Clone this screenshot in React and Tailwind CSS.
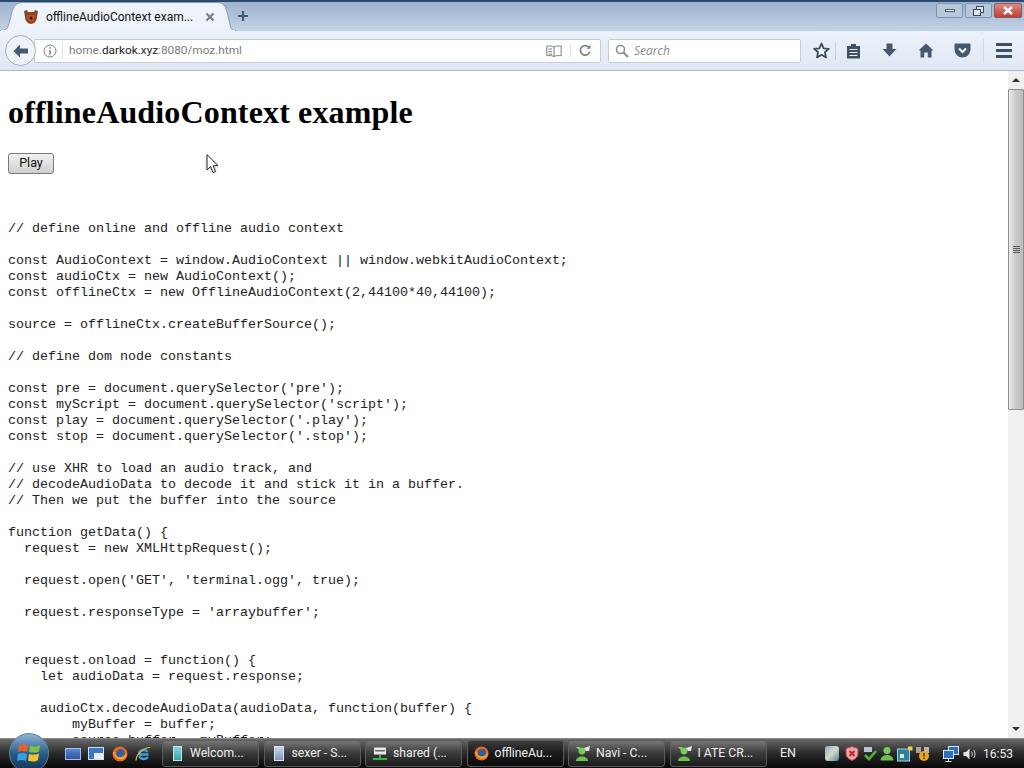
import React from 'react';

const codeLines = [
  "// define online and offline audio context",
  "",
  "const AudioContext = window.AudioContext || window.webkitAudioContext;",
  "const audioCtx = new AudioContext();",
  "const offlineCtx = new OfflineAudioContext(2,44100*40,44100);",
  "",
  "source = offlineCtx.createBufferSource();",
  "",
  "// define dom node constants",
  "",
  "const pre = document.querySelector('pre');",
  "const myScript = document.querySelector('script');",
  "const play = document.querySelector('.play');",
  "const stop = document.querySelector('.stop');",
  "",
  "// use XHR to load an audio track, and",
  "// decodeAudioData to decode it and stick it in a buffer.",
  "// Then we put the buffer into the source",
  "",
  "function getData() {",
  "  request = new XMLHttpRequest();",
  "",
  "  request.open('GET', 'terminal.ogg', true);",
  "",
  "  request.responseType = 'arraybuffer';",
  "",
  "",
  "  request.onload = function() {",
  "    let audioData = request.response;",
  "",
  "    audioCtx.decodeAudioData(audioData, function(buffer) {",
  "        myBuffer = buffer;",
  "        source.buffer = myBuffer;",
];

const FirefoxIcon = ({ size = 15 }) => (
  <svg width={size} height={size} viewBox="0 0 16 16">
    <circle cx="8" cy="8" r="7.5" fill="#e8641f" />
    <circle cx="8.5" cy="7.5" r="4.4" fill="#2f5f9e" />
    <path d="M1 6 C2 12 8 15 12 13 C15 11 15 8 14 5 C14 9 11 11 8 11 C5 11 3 9 3.5 6 Z" fill="#f3a02c" />
  </svg>
);

const BuddyIcon = () => (
  <svg width="16" height="17" viewBox="0 0 16 17">
    <circle cx="7" cy="6" r="3.4" fill="#7ccb5f" />
    <path d="M1 16 C1 10 13 10 13 16 Z" fill="#6cbf50" />
    <path d="M9 3 L15 1 L14 6 L11 6 Z" fill="#dfe9e4" />
    <path d="M1 2 L5 2 L4 5 Z" fill="#8fd66f" />
  </svg>
);

const TaskButton = ({ icon, label, active }) => (
  <div className={`w-[97px] h-[27px] mr-[4.5px] shrink-0 flex items-center pl-[6px] gap-[5px] rounded-[3px] border border-[#5c5c5c] ${active ? 'bg-gradient-to-b from-[#3c3c3c] via-[#1a1a1a] to-[#0c0c0c]' : 'bg-gradient-to-b from-[#777777] via-[#3a3a3a] to-[#1c1c1c]'}`}>
    <span className="w-[16px] flex justify-center shrink-0">{icon}</span>
    <span className="text-[12.2px] text-[#f0f0f0] whitespace-nowrap font-['Roboto',sans-serif]">{label}</span>
  </div>
);

export default function App() {
  return (
    <div className="relative w-[1024px] h-[768px] overflow-hidden flex flex-col bg-white font-['Liberation_Sans',sans-serif]">
      {/* Title bar and tab */}
      <div className="h-[31px] shrink-0 flex items-start border-t-2 border-[#2a4a70] bg-gradient-to-b from-[#9db2cc] to-[#c3d3e8]">
        <div className="relative w-[236px] h-[29px] flex items-center pl-[23px] shrink-0">
          <svg className="absolute inset-0" width="236" height="29" viewBox="0 0 236 29">
            <path d="M0 28.5 C8 28.5 8 26 11 14 C13 5 15 0.5 23 0.5 L218 0.5 C224 0.5 226 5 228 14 C231 26 230 28.5 236 28.5 Z" fill="#eef3f9" stroke="#8b9db3" />
            <path d="M1 29 L235 29" stroke="#eaf0f8" strokeWidth="2" />
          </svg>
          <svg className="relative mr-[7px]" width="16" height="16" viewBox="0 0 16 16">
            <path d="M1 2 L4 1 L5 3 L11 3 L12 1 L15 2 L14 8 C14 12 11 15 8 15 C5 15 2 12 2 8 Z" fill="#8a4a20" />
            <path d="M4 6 L12 6 L11 11 L8 13 L5 11 Z" fill="#c4502a" />
            <circle cx="8" cy="9" r="1.5" fill="#2c1a10" />
          </svg>
          <span className="relative text-[12px] text-[#111111] whitespace-nowrap w-[152px] font-['Roboto',sans-serif]">offlineAudioContext exam...</span>
          <svg className="relative ml-[7px]" width="10" height="10" viewBox="0 0 10 10">
            <path d="M1.5 1.5 L8.5 8.5 M8.5 1.5 L1.5 8.5" stroke="#7a8088" strokeWidth="2.2" />
          </svg>
        </div>
        <svg className="ml-[1px] mt-[8px]" width="12" height="12" viewBox="0 0 12 12">
          <path d="M6 1 V11 M1 6 H11" stroke="#44586f" strokeWidth="2.2" />
        </svg>
        <div className="ml-auto mt-[1px] mr-[2px] flex gap-[2px]">
          <div className="w-[27px] h-[15px] rounded-[2px] border border-[#7f92ab] bg-[#b7c8dd] flex items-center justify-center">
            <div className="w-[10px] h-[3px] bg-[#f2f5f9] border border-[#4c5b6c]" />
          </div>
          <div className="w-[27px] h-[15px] rounded-[2px] border border-[#7f92ab] bg-[#b7c8dd] flex items-center justify-center">
            <svg width="11" height="10" viewBox="0 0 11 10" fill="#dbe5ef" stroke="#3c4a5a">
              <rect x="3.5" y="0.5" width="7" height="6" />
              <rect x="0.5" y="3.5" width="7" height="6" />
            </svg>
          </div>
          <div className="w-[28px] h-[15px] rounded-[2px] border border-[#8a5a5a] bg-gradient-to-b from-[#dc8a80] to-[#c23c30] flex items-center justify-center">
            <svg width="10" height="9" viewBox="0 0 10 9">
              <path d="M1 1 L9 8 M9 1 L1 8" stroke="#ffffff" strokeWidth="2.4" />
            </svg>
          </div>
        </div>
      </div>

      {/* Navigation bar */}
      <div className="h-[40px] shrink-0 flex items-center pl-[5px] border-b border-[#b4bcc6] bg-gradient-to-b from-[#ecf2fa] to-[#e0e8f4]">
        <div className="relative z-10 w-[31px] h-[31px] shrink-0 rounded-full border border-[#a3afbd] bg-[#eef3f9] flex items-center justify-center">
          <svg width="16" height="14" viewBox="0 0 16 14">
            <path d="M7 0.5 L0.5 7 L7 13.5 L7 9.5 L15 9.5 L15 4.5 L7 4.5 Z" fill="#47596e" />
          </svg>
        </div>
        <div className="-ml-[2px] w-[567px] h-[24px] shrink-0 flex items-center bg-white border border-[#c3ccd8] rounded-r-[2px]">
          <svg className="ml-[8px]" width="14" height="14" viewBox="0 0 14 14" fill="none">
            <circle cx="7" cy="7" r="6" stroke="#7b7f85" />
            <path d="M7 6 V10.5 M7 3.2 V4.8" stroke="#7b7f85" strokeWidth="1.5" />
          </svg>
          <div className="w-px h-[18px] bg-[#dfe3e8] ml-[5px] mr-[6px]" />
          <span className="text-[11.8px] text-[#7d7d7d] font-['Roboto',sans-serif]">home.<span className="text-[#222222]">darkok.xyz</span>:8080/moz.html</span>
          <svg className="ml-auto" width="16" height="12" viewBox="0 0 16 12" fill="none" stroke="#777c82">
            <path d="M8 2 C6 0.8 3 0.8 0.8 1.2 V10.8 C3 10.4 6 10.4 8 11.5 C10 10.4 13 10.4 15.2 10.8 V1.2 C13 0.8 10 0.8 8 2 Z M8 2 V11.5" />
            <path d="M2.5 4 H6 M2.5 6.5 H6 M2.5 9 H6" />
          </svg>
          <div className="w-px h-[14px] bg-[#dfe3e8] ml-[8px] mr-[8px]" />
          <svg className="mr-[8px]" width="13" height="13" viewBox="0 0 13 13" fill="none">
            <path d="M10.8 7.6 A4.8 4.8 0 1 1 9.6 3" stroke="#7d8185" strokeWidth="1.7" />
            <path d="M11.5 0.8 V4.8 H7.5 Z" fill="#7d8185" />
          </svg>
        </div>
        <div className="ml-[7px] w-[193px] h-[24px] shrink-0 flex items-center bg-white border border-[#c3ccd8] rounded-[2px] pl-[6px]">
          <svg width="14" height="14" viewBox="0 0 14 14" fill="none">
            <circle cx="5.5" cy="5.5" r="4" stroke="#8a8f95" strokeWidth="1.6" />
            <path d="M8.5 8.5 L13 13" stroke="#8a8f95" strokeWidth="2.2" />
          </svg>
          <span className="ml-[5px] text-[12px] italic text-[#8b8b8b] font-['Open_Sans',sans-serif]">Search</span>
        </div>
        <svg className="ml-[12px]" width="17" height="17" viewBox="0 0 17 17">
          <path d="M8.5 1.5 L10.6 6.3 L15.8 6.8 L11.9 10.2 L13 15.4 L8.5 12.7 L4 15.4 L5.1 10.2 L1.2 6.8 L6.4 6.3 Z" fill="#f4f7fb" stroke="#3a4c60" strokeWidth="1.8" strokeLinejoin="round" />
        </svg>
        <div className="w-px h-[18px] bg-[#c7d0dc] ml-[5px] mr-[10px]" />
        <svg width="15" height="16" viewBox="0 0 15 16">
          <path d="M1 3 H5 V1 H10 V3 H14 V15.5 H1 Z" fill="#3f5064" />
          <path d="M3.5 6.5 H11.5 M3.5 9.5 H11.5 M3.5 12.5 H11.5" stroke="#e8eef6" strokeWidth="1.2" />
        </svg>
        <svg className="ml-[21px]" width="15" height="15" viewBox="0 0 15 15">
          <path d="M4.5 0.5 H10.5 V6 H14.5 L7.5 13.5 L0.5 6 H4.5 Z" fill="#46586c" />
        </svg>
        <svg className="ml-[21px]" width="16" height="15" viewBox="0 0 16 15">
          <path d="M8 0.5 L15.5 7.5 L13.5 7.5 V14.5 H9.8 V9.5 H6.2 V14.5 H2.5 V7.5 H0.5 Z" fill="#46586c" />
        </svg>
        <svg className="ml-[20px]" width="17" height="15" viewBox="0 0 17 15">
          <path d="M1.5 0.5 H15.5 A1 1 0 0 1 16.5 1.5 V6 C16.5 11 12.5 14.5 8.5 14.5 C4.5 14.5 0.5 11 0.5 6 V1.5 A1 1 0 0 1 1.5 0.5 Z" fill="#46586c" />
          <path d="M5 5.5 L8.5 9 L12 5.5" fill="none" stroke="#eef3f9" strokeWidth="2.2" />
        </svg>
        <div className="w-px h-[24px] bg-[#d0d8e3] ml-[12px] mr-[12px]" />
        <div className="flex flex-col gap-[3px]">
          <div className="w-[16px] h-[3px] bg-[#3f5064]" />
          <div className="w-[16px] h-[3px] bg-[#3f5064]" />
          <div className="w-[16px] h-[3px] bg-[#3f5064]" />
        </div>
      </div>

      {/* Page content and scrollbar */}
      <div className="flex-1 min-h-0 flex">
        <div className="flex-1 min-w-0 overflow-hidden pl-[8px]">
          <h1 className="mt-[23px] text-[32px] leading-[37px] tracking-[0.15px] font-bold text-black font-['Liberation_Serif',serif]">offlineAudioContext example</h1>
          <button className="block mt-[22px] w-[46px] h-[21px] rounded-[3px] border border-[#7a7a7a] bg-gradient-to-b from-[#f2f2f2] to-[#cfcfcf] text-[12.5px] text-[#111111] font-['Roboto',sans-serif]">Play</button>
          <pre className="mt-[47px] text-[13.33px] leading-[16px] text-[#222222] font-['Liberation_Mono',monospace]">{codeLines.join("\n")}</pre>
        </div>
        <div className="w-[16px] shrink-0 flex flex-col bg-[#f0f0f0]">
          <div className="h-[18px] flex items-center justify-center">
            <div className="w-0 h-0 border-x-[4px] border-x-transparent border-b-[4px] border-b-[#333333]" />
          </div>
          <div className="h-[321px] border border-[#8e8e8e] rounded-[1px] bg-gradient-to-r from-[#ececec] via-[#c9c9c9] to-[#bcbcbc] flex flex-col items-center justify-center gap-[1px]">
            <div className="w-[7px] h-px bg-[#555555]" />
            <div className="w-[7px] h-px bg-[#555555]" />
            <div className="w-[7px] h-px bg-[#555555]" />
            <div className="w-[7px] h-px bg-[#555555]" />
          </div>
          <div className="mt-auto h-[18px] flex items-center justify-center">
            <div className="w-0 h-0 border-x-[4px] border-x-transparent border-t-[4px] border-t-[#333333]" />
          </div>
        </div>
      </div>

      {/* Taskbar */}
      <div className="h-[30px] shrink-0 flex items-center border-t border-[#8a8a8a] bg-gradient-to-b from-[#6a6a6a] via-[#2a2a2a] to-[#080808]">
        <div className="w-[65px] shrink-0" />
        <div className="w-[97px] shrink-0 flex items-center">
          <div className="w-[16px] h-[12px] bg-gradient-to-b from-[#5a86d0] to-[#2f55a0] border border-[#a9bfe3]" />
          <div className="ml-[7px] w-[16px] h-[13px] bg-[#3a78c4] border border-[#cfe0f4] flex items-end justify-end">
            <div className="w-[9px] h-[6px] bg-[#e8eef6]" />
          </div>
          <span className="ml-[8px]"><FirefoxIcon size={16} /></span>
          <svg className="ml-[7px]" width="16" height="16" viewBox="0 0 16 16" fill="none">
            <path d="M13.5 8.5 H4 M4 8.5 C4 4 10 2.5 12.5 6 M4.5 10 C5.5 13.5 10.5 14 13 11" stroke="#3fa0e0" strokeWidth="2.4" />
            <path d="M1 14.5 C1 9 8 1.5 15 1.5" stroke="#e8b93a" strokeWidth="1.2" />
          </svg>
        </div>
        <TaskButton
          label="Welcom..."
          icon={<div className="w-[9px] h-[15px] bg-gradient-to-b from-[#7fd8d8] to-[#2ea6b0] border border-[#bfe9e9]" />}
        />
        <TaskButton
          label="sexer - S..."
          icon={<div className="w-[10px] h-[15px] bg-gradient-to-b from-[#c9d6ea] to-[#7d95c0] border border-[#d9e2f0]" />}
        />
        <TaskButton
          label="shared (..."
          icon={
            <svg width="16" height="14" viewBox="0 0 16 14">
              <rect x="2" y="0.5" width="12" height="7" fill="#e8e8e8" />
              <rect x="3" y="3" width="10" height="1.5" fill="#666666" />
              <path d="M8 8 V11 M1 12 H15" stroke="#35b54a" strokeWidth="2" />
            </svg>
          }
        />
        <TaskButton label="offlineAu..." icon={<FirefoxIcon />} active />
        <TaskButton label="Navi - C..." icon={<BuddyIcon />} />
        <TaskButton label="I ATE CR..." icon={<BuddyIcon />} />
        <span className="ml-[9px] w-[17px] text-[12.5px] text-[#eeeeee] font-['Roboto',sans-serif]">EN</span>

        {/* Tray */}
        <div className="ml-[28px] flex items-center">
          <div className="w-[14px] h-[15px] rounded-[3px] bg-gradient-to-br from-[#7fb0d8] via-[#d8d8c0] to-[#4f7fb0]" />
          <svg className="ml-[6px]" width="14" height="15" viewBox="0 0 14 15">
            <path d="M7 0.5 L13 2.5 V8 C13 11 10 13.5 7 14.5 C4 13.5 1 11 1 8 V2.5 Z" fill="#e8a8ac" stroke="#b8434a" />
            <path d="M4.5 5 L9.5 10 M9.5 5 L4.5 10" stroke="#c8242c" strokeWidth="2" />
          </svg>
          <svg className="ml-[4px]" width="14" height="15" viewBox="0 0 14 15">
            <rect x="1" y="1" width="8" height="5" fill="#b8c4d4" />
            <path d="M2 9 L6 13 L13 5" fill="none" stroke="#4fae3a" strokeWidth="2.6" />
          </svg>
          <svg className="ml-[3px]" width="14" height="15" viewBox="0 0 14 15">
            <circle cx="7" cy="4.5" r="3.5" fill="#7ccb5f" />
            <path d="M0.5 14.5 C0.5 7 13.5 7 13.5 14.5 Z" fill="#6cbf50" />
          </svg>
          <svg className="ml-[3px]" width="16" height="16" viewBox="0 0 16 16">
            <rect x="0.5" y="3" width="12" height="12" fill="#2f7f98" stroke="#9fd0dc" />
            <rect x="3" y="8" width="4" height="4" fill="#d8e8ec" />
            <rect x="11" y="0.5" width="4.5" height="4" fill="#e8d04a" />
          </svg>
          <svg className="ml-[2px]" width="16" height="16" viewBox="0 0 16 16">
            <rect x="1" y="1" width="5" height="6" fill="#a8a49a" />
            <rect x="9" y="1" width="5" height="6" fill="#b8b4a8" />
            <circle cx="9" cy="10" r="5" fill="#e8a81e" />
            <path d="M9 7 V10.5 M9 11.5 V13" stroke="#3a2a08" strokeWidth="1.4" />
          </svg>
        </div>
        <svg className="ml-[12px]" width="16" height="16" viewBox="0 0 16 16" fill="#2f6fc0" stroke="#d8e6f6">
          <rect x="5.5" y="0.5" width="10" height="8" />
          <rect x="0.5" y="4.5" width="10" height="8" />
          <path d="M5.5 12.5 V15.5 M2.5 15.5 H8.5" fill="none" />
        </svg>
        <svg className="ml-[4px]" width="14" height="14" viewBox="0 0 14 14" fill="none">
          <path d="M0.5 5 H3 L6.5 1.5 V12.5 L3 9 H0.5 Z" fill="#e6e6e6" />
          <path d="M8.5 4.5 C9.5 6 9.5 8 8.5 9.5 M10.8 3 C12.4 5.5 12.4 8.5 10.8 11" stroke="#d8d8d8" />
        </svg>
        <span className="ml-[6px] text-[12px] text-[#eeeeee] font-['Roboto',sans-serif]">16:53</span>
      </div>

      {/* Start orb sits over the taskbar edge */}
      <div className="absolute left-[9px] top-[733px] w-[40px] h-[35px] overflow-hidden">
        <div className="w-[40px] h-[40px] rounded-full border border-[#5f7f9c] bg-gradient-to-b from-[#8fb4d4] via-[#2b5f8c] to-[#0f3050] flex items-center justify-center">
          <svg width="24" height="22" viewBox="0 0 24 22">
            <path d="M2 4 C5 2 8 2 11 3.5 L10 10 C7 8.5 4 8.5 1 10 Z" fill="#ef5a2a" />
            <path d="M13 3.5 C16 5 19 5 23 3 L22 9.5 C19 11 16 11 12 10 Z" fill="#7cc242" />
            <path d="M1 12 C4 10.5 7 10.5 10 12 L9 19 C6 17.5 3 17.5 0 19 Z" fill="#38a0e8" />
            <path d="M12 12 C15 13 18 13 22 11.5 L21 18 C18 20 15 20 11 18.5 Z" fill="#f8c22c" />
          </svg>
        </div>
      </div>

      {/* Mouse pointer */}
      <svg className="absolute left-[206px] top-[154px] drop-shadow-sm" width="14" height="20" viewBox="0 0 14 20">
        <path d="M1 0.7 V16 L4.6 12.6 L7 18.6 L9.6 17.5 L7.1 11.8 L12 11.6 Z" fill="#ffffff" stroke="#222222" strokeWidth="1" strokeLinejoin="round" />
      </svg>
    </div>
  );
}
